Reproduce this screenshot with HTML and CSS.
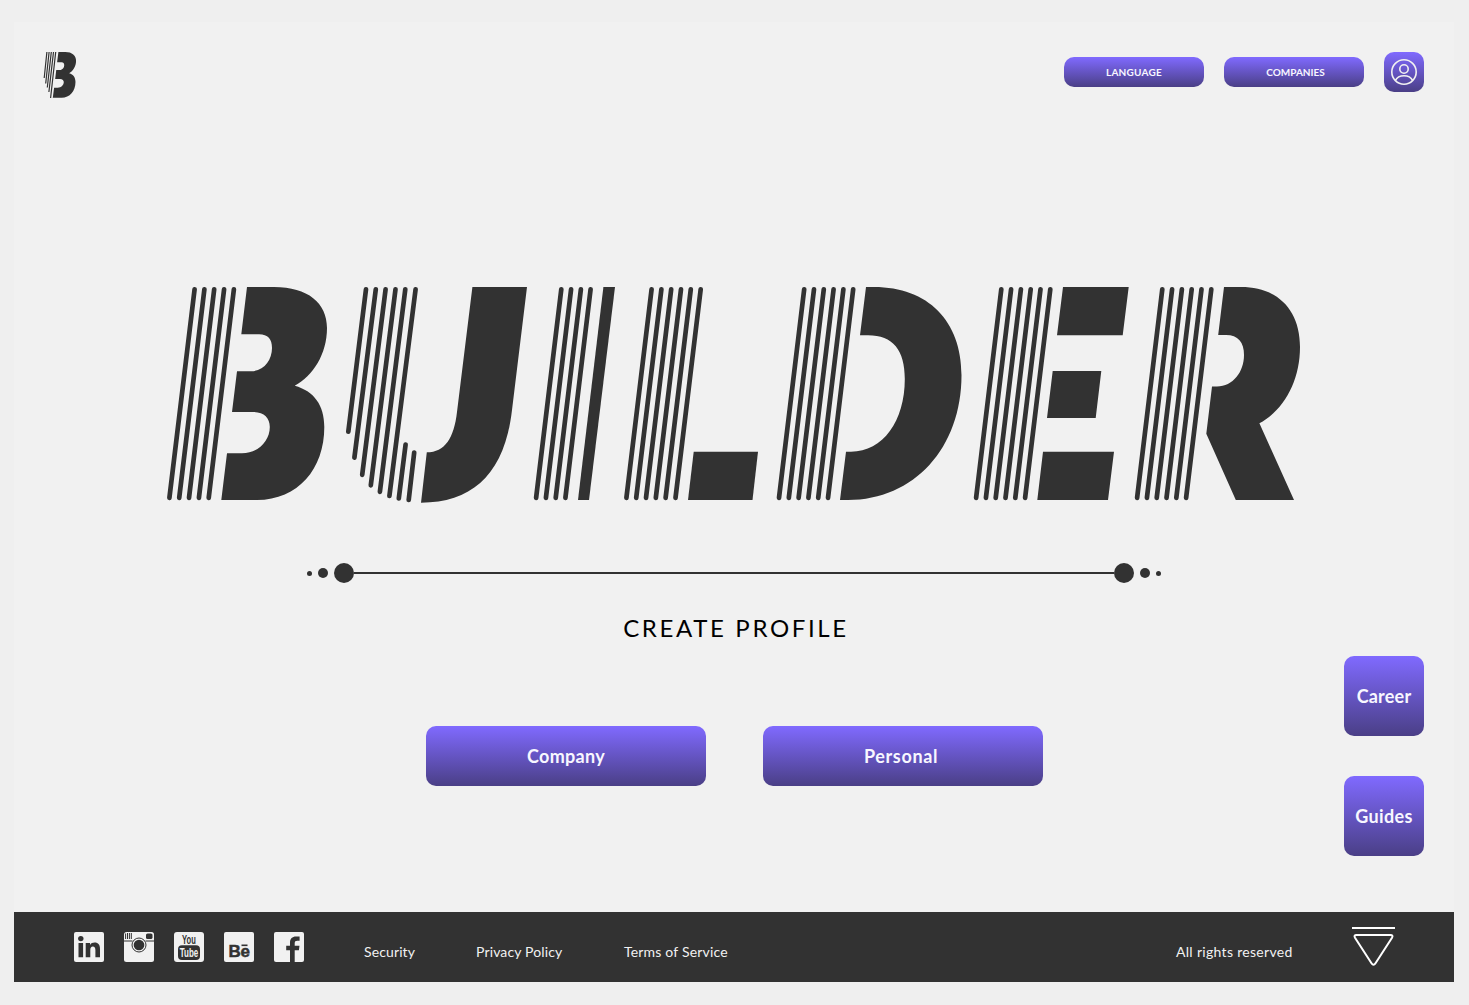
FILE: index.html
```html
<!DOCTYPE html>
<html lang="en">
<head>
<meta charset="utf-8">
<title>Builder</title>
<link rel="stylesheet" href="styles.css">
</head>
<body>
<div class="page">
  <header class="header">
    <svg class="mark" viewBox="42 50 36 50" role="img" aria-label="Builder">
      <g class="mark-lines">
        <path d="M46.9 52L44.2 78M49.1 52L45.7 83.5M51.3 52L47.3 87.5M53.5 52L48.9 92M55.7 52L50.6 98"/>
      </g>
      <path class="ink" transform="translate(5.600 -9.900) scale(.2155)" d="M245 287H277C309 287 327 303 327 328C327 354 313 376 295 385.700C314 391 324.300 405 324.300 427C324.300 469 298 500 260 500H219L225 453.300H242C258 453.300 270 441 270 427C270 418 264 412 253 412H230L235 371.300H252C264 371.300 272 360 272 348C272 339 268 334.300 260 334.300H239Z"/>
    </svg>
    <nav class="top-nav">
      <button class="btn btn-small t-language">LANGUAGE</button>
      <button class="btn btn-small t-companies">COMPANIES</button>
      <button class="btn btn-user" aria-label="Account">
        <svg class="user-icon" viewBox="0 0 26 26"><circle cx="13" cy="13" r="12.200"/><circle cx="13" cy="10" r="4.200"/><path d="M4.300 21.500C6 18.300 9.300 16.800 13 16.800S20 18.300 21.700 21.500"/></svg>
      </button>
    </nav>
  </header>

  <main class="hero">
    <svg class="wordmark" viewBox="160 280 1150 230" role="img" aria-label="Builder">
      <defs>
        <path id="stripe" d="M25.200 289.300L0 497.900"/>
      </defs>
      <g class="stripes">
        <use href="#stripe" x="169.400"/><use href="#stripe" x="179.200"/><use href="#stripe" x="189"/><use href="#stripe" x="198.900"/><use href="#stripe" x="208.700"/>
        <path d="M366 289.300L348.300 431.700M375.800 289.300L354.400 457.600M385.600 289.300L362.200 474.800M395.500 289.300L370.800 485.300M405.300 289.300L379.900 491.800M415.600 289.300L389.400 496M405.600 444.500L398.800 498.500M414.200 452.500L408.700 500"/>
        <use href="#stripe" x="536.100"/><use href="#stripe" x="545.900"/><use href="#stripe" x="555.700"/><use href="#stripe" x="565.400"/>
        <use href="#stripe" x="626.400"/><use href="#stripe" x="636.200"/><use href="#stripe" x="646"/><use href="#stripe" x="655.800"/><use href="#stripe" x="665.600"/><use href="#stripe" x="675.500"/>
        <use href="#stripe" x="779"/><use href="#stripe" x="788.800"/><use href="#stripe" x="798.600"/><use href="#stripe" x="808.400"/><use href="#stripe" x="818.200"/><use href="#stripe" x="828"/>
        <use href="#stripe" x="976.100"/><use href="#stripe" x="985.900"/><use href="#stripe" x="995.700"/><use href="#stripe" x="1005.500"/><use href="#stripe" x="1015.300"/><use href="#stripe" x="1025.100"/>
        <use href="#stripe" x="1137.100"/><use href="#stripe" x="1146.900"/><use href="#stripe" x="1156.700"/><use href="#stripe" x="1166.500"/><use href="#stripe" x="1176.300"/><use href="#stripe" x="1186.100"/>
      </g>
      <g class="ink">
        <path d="M247 287H274C308 287 327 303 327 328C327 354 313 376 294.700 385.700C314 391 324.300 405 324.300 427C324.300 469 298 500 257 500H221.300L227 453.300H242C258 453.300 269.800 441 269.800 427C269.800 418 264 412 253 412H232L237 371.300H251C264 371.300 272 360 272 348C272 339 268 334.300 259 334.300H241.300Z"/>
        <path d="M472.400 287H527L512 410C505 472 474 502.700 421 502.700L426.800 452.300C445 452.300 454 438 457 412Z"/>
        <path d="M603.400 287H615L589 500H578Z"/>
        <path d="M693.700 451.700H758L752.500 500H688Z"/>
        <path d="M866 287H874C928 287 961.500 321 961.500 375C961.500 448 914 500 848 500H840L846 451.700H851C883 451.700 904.800 421 904.800 379C904.800 350 893 335.300 868 335.300H860Z"/>
        <path d="M1063 287H1128.700L1122.700 335.300H1057ZM1052.700 371H1101.300L1095.700 418H1047ZM1043 451.700H1114L1108 500H1037.300Z"/>
        <path d="M1224 287H1241C1278 287 1300 310 1300 347C1300 381 1284 410 1259.400 423.300L1294 500H1235.800L1206.300 433.700L1212 386.400H1217C1233 386.400 1244 372 1244 355C1244 342 1238 335 1226 335H1218.200Z"/>
      </g>
    </svg>

    <div class="divider">
      <i class="dot dot-s"></i><i class="dot dot-m"></i><i class="dot dot-l"></i>
      <i class="rule"></i>
      <i class="dot dot-l"></i><i class="dot dot-m"></i><i class="dot dot-s"></i>
    </div>

    <h1 class="title">CREATE PROFILE</h1>
    <div class="choices">
      <button class="btn btn-large t-company">Company</button>
      <button class="btn btn-large t-personal">Personal</button>
    </div>
  </main>

  <aside class="side">
    <button class="btn btn-square t-career">Career</button>
    <button class="btn btn-square t-guides">Guides</button>
  </aside>

  <footer class="footer">
    <div class="social">
      <svg class="tile" viewBox="0 0 30 30"><rect class="paper" width="30" height="30" rx="2"/><circle class="ink" cx="6.800" cy="6.600" r="2.700"/><path class="ink" d="M4.500 11H9.100V25.300H4.500ZM11.700 11H16V13C17 11.400 18.600 10.600 20.600 10.600C24.300 10.600 26 13 26 17V25.300H21.400V18C21.400 15.800 20.600 14.500 18.900 14.500C17.100 14.500 16.300 15.800 16.300 18V25.300H11.700Z"/></svg>
      <svg class="tile" viewBox="0 0 30 30"><rect class="paper" width="30" height="30" rx="2.500"/><path class="ink-line" d="M1.600 1.500V7M3.500 1V7M5.400 1V7M7.300 1V7M0 9H8.500M21.500 9H30"/><rect class="ink" x="22" y="1.500" width="6.500" height="5.500" rx="1.600"/><circle class="paper-ring" cx="15" cy="13" r="7"/><circle class="ink" cx="15" cy="13" r="5.300"/></svg>
      <svg class="tile" viewBox="0 0 30 30"><rect class="paper" width="30" height="30" rx="3"/><text class="you" transform="translate(15 11.600) scale(1 1.700)">You</text><rect class="ink" x="4" y="13.300" width="22" height="14.700" rx="4"/><text class="tube" transform="translate(15 25.200) scale(1 1.650)">Tube</text></svg>
      <svg class="tile" viewBox="0 0 30 30"><rect class="paper" width="30" height="30" rx="2"/><text class="be" x="15" y="25">Be</text><rect class="ink" x="17.500" y="12.500" width="6" height="1.600"/></svg>
      <svg class="tile" viewBox="0 0 30 30"><rect class="paper" width="30" height="30" rx="2"/><path class="ink" d="M16 30V18.300H12.200V13.800H16V10.500C16 6.500 18.300 4.400 22 4.400H25.600V8.800H23.300C21.400 8.800 20.700 9.600 20.700 11.300V13.800H25.500L24.900 18.300H20.700V30Z"/></svg>
    </div>
    <nav class="links">
      <a class="t-security">Security</a>
      <a class="t-privacy">Privacy Policy</a>
      <a class="t-terms">Terms of Service</a>
    </nav>
    <span class="rights">All rights reserved</span>
    <svg class="to-top" viewBox="0 0 43 42"><path d="M0 2H43M4.500 9H38.500Q41.500 9 40 11.700L23.500 37.300Q21.500 40.300 19.500 37.300L3 11.700Q1.500 9 4.500 9Z"/></svg>
  </footer>
</div>
</body>
</html>
```
FILE: styles.css
```css
* { box-sizing: border-box; }
body {
  margin: 0;
  padding: 22px 15px 23px 14px;
  height: 1005px;
  background: #efefef;
  font-family: Lato, "Open Sans", sans-serif;
}
.page {
  width: 1440px;
  height: 960px;
  background: #f1f1f1;
  display: grid;
  grid-template-columns: 1fr 80px 30px;
  grid-template-rows: 258px 632px 70px;
}
.header {
  grid-column: 1 / -1;
  display: flex;
  justify-content: space-between;
  align-items: flex-start;
  padding: 28px 30px 0 28px;
}
.mark { width: 36px; height: 50px; }
.mark-lines { fill: none; stroke: #323232; stroke-width: 1.2; }
.ink { fill: #323232; }
.top-nav { display: flex; align-items: center; gap: 20px; padding-top: 2px; }
.btn {
  border: 0;
  padding: 0;
  border-radius: 10px;
  background: linear-gradient(#806aff, #4a3f86);
  color: #f8f7ff;
  font-family: inherit;
  font-weight: 700;
  display: flex;
  align-items: center;
  justify-content: center;
}
.btn-small { width: 140px; height: 30px; font-size: 10px; }
.t-language { letter-spacing: .25px; }
.t-companies { padding-left: 3px; }
.btn-user { width: 40px; height: 40px; }
.user-icon { width: 26px; height: 26px; fill: none; stroke: #f1f1f1; stroke-width: 1.6; }
.hero {
  grid-column: 1 / -1;
  grid-row: 2;
  display: flex;
  flex-direction: column;
  align-items: center;
}
.wordmark { width: 1150px; height: 230px; margin-left: 2px; flex: none; }
.stripes { fill: none; stroke: #323232; stroke-width: 4.7; stroke-linecap: round; }
.divider { display: flex; align-items: center; width: 854px; height: 20px; margin-top: 53px; }
.dot { border-radius: 50%; background: #323232; flex: none; }
.dot-s { width: 5px; height: 5px; }
.dot-m { width: 10px; height: 10px; margin: 0 6px; }
.dot-l { width: 20px; height: 20px; }
.rule { flex: 1; height: 2px; background: #323232; }
.title { margin: 29px 0 0; padding-left: 4px; height: 32px; line-height: 32px; font-size: 24px; font-weight: 400; letter-spacing: 2.65px; color: #000; }
.choices { display: flex; gap: 57px; margin: 82px 0 0 1px; }
.btn-large { width: 280px; height: 60px; font-size: 18px; }
.t-company { letter-spacing: .3px; }
.t-personal { letter-spacing: .65px; padding-right: 4px; }
.t-career { letter-spacing: .2px; }
.t-guides { letter-spacing: .35px; }
.side {
  grid-column: 2;
  grid-row: 2;
  align-self: end;
  display: grid;
  gap: 40px;
  padding-bottom: 56px;
}
.btn-square { width: 80px; height: 80px; font-size: 18px; }
.footer {
  grid-column: 1 / -1;
  grid-row: 3;
  background: #323232;
  color: #f1f1f1;
  display: flex;
  align-items: flex-start;
  padding: 0 59px 0 60px;
  font-size: 14px;
  line-height: 20px;
}
.social { display: flex; gap: 20px; padding-top: 20px; width: 290px; }
.tile { width: 30px; height: 30px; }
.paper { fill: #f1f1f1; }
.paper-ring { fill: #f1f1f1; stroke: #323232; stroke-width: 1; }
.ink-line { stroke: #323232; stroke-width: 1; fill: none; }
.you, .tube, .be { text-anchor: middle; font-family: "Liberation Sans", sans-serif; font-weight: 700; }
.you { font-size: 7.6px; fill: #323232; }
.tube { font-size: 8px; fill: #f1f1f1; }
.be { font-size: 17px; letter-spacing: -.3px; fill: #323232; stroke: #323232; stroke-width: .5; }
.links { display: flex; padding-top: 30px; }
.t-security { width: 112px; letter-spacing: .12px; }
.t-privacy { width: 148px; letter-spacing: .14px; }
.t-terms { letter-spacing: .19px; }
.rights { margin-left: auto; padding-top: 30px; width: 176px; letter-spacing: .31px; }
.to-top { width: 43px; height: 42px; margin-top: 14px; fill: none; stroke: #fff; stroke-width: 2; }
```
